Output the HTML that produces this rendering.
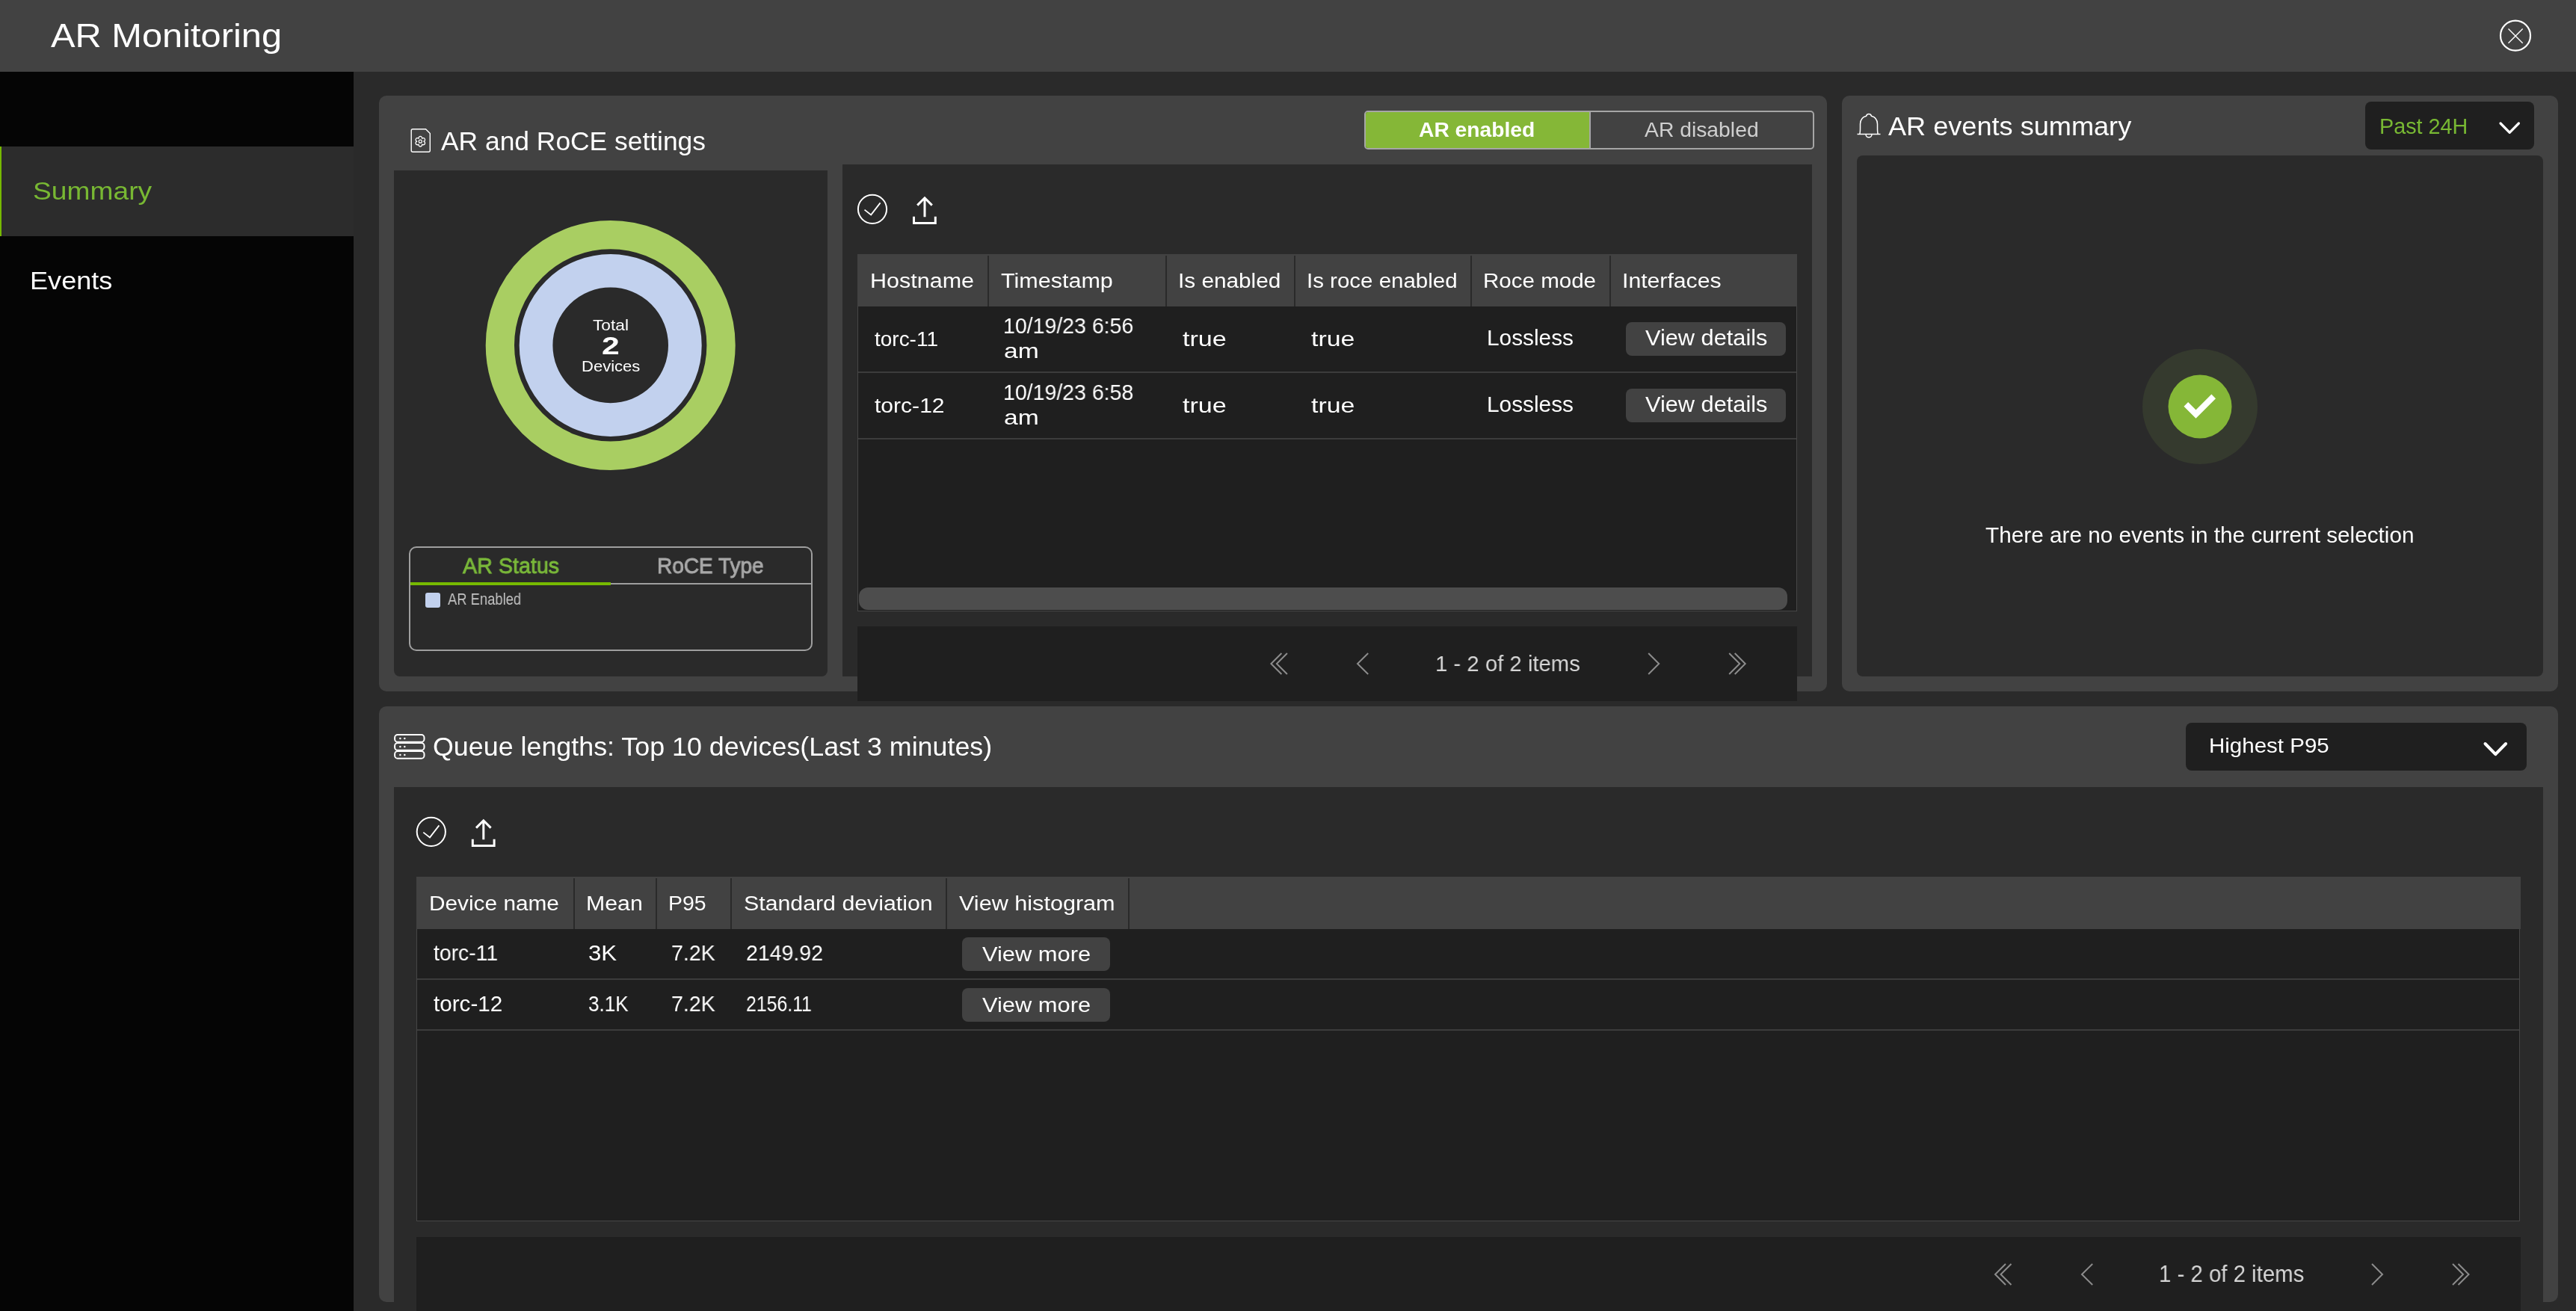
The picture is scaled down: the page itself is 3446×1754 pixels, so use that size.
<!DOCTYPE html>
<html><head><meta charset="utf-8"><style>
html,body{margin:0;padding:0;}
body{width:3446px;height:1754px;overflow:hidden;background:#2a2a2a;position:relative;font-family:"Liberation Sans",sans-serif;}
.a{position:absolute;box-sizing:border-box;}
.tx{position:absolute;white-space:pre;line-height:1;transform-origin:0 0;will-change:transform;}
svg{position:absolute;overflow:visible;}
</style></head><body>
<!-- header -->
<div class="a" style="left:0;top:0;width:3446px;height:96px;background:#424242"></div>
<svg style="left:0;top:0" width="1" height="1"><circle cx="3365" cy="47.7" r="20" fill="none" stroke="#fff" stroke-width="2.2"/><path d="M3355.5 38.5L3374.7 57.7M3374.7 38.5L3355.5 57.7" stroke="#fff" stroke-width="1.4"/></svg>
<!-- sidebar -->
<div class="a" style="left:0;top:96px;width:473px;height:1658px;background:#050505"></div>
<div class="a" style="left:0;top:196px;width:473px;height:120px;background:#2c2c2c"></div>
<div class="a" style="left:0;top:196px;width:2px;height:120px;background:#76b900"></div>

<!-- card1 -->
<div class="a" style="left:507px;top:128px;width:1937px;height:797px;background:#424242;border-radius:10px"></div>
<svg style="left:0;top:0" width="1" height="1"><path d="M552.2 172.7H569.5L575.3 178.5V201.2A2 2 0 0 1 573.3 203.2H552.2A2 2 0 0 1 550.2 201.2V174.7A2 2 0 0 1 552.2 172.7Z" fill="none" stroke="#fff" stroke-width="1.4"/>
<path d="M560.00 185.22C559.64 181.43 564.96 181.43 564.60 185.22C567.69 183.01 570.35 187.62 566.90 189.20C570.35 190.78 567.69 195.39 564.60 193.18C564.96 196.97 559.64 196.97 560.00 193.18C556.91 195.39 554.25 190.78 557.70 189.20C554.25 187.62 556.91 183.01 560.00 185.22Z" stroke-linejoin="round" fill="none" stroke="#fff" stroke-width="1.3"/><circle cx="562.3" cy="189.2" r="2" fill="none" stroke="#fff" stroke-width="1.2"/></svg>
<!-- toggle -->
<div class="a" style="left:1825px;top:148px;width:602px;height:52px;border:2px solid #a6a6a6;border-radius:5px;background:#424242;overflow:hidden"><div class="a" style="left:0;top:0;width:299px;height:48px;background:#85b737"></div><div class="a" style="left:299px;top:0;width:2px;height:48px;background:#a6a6a6"></div></div>
<!-- donut panel -->
<div class="a" style="left:527px;top:228px;width:580px;height:677px;background:#2a2a2a;border-radius:0 0 8px 8px"></div>
<svg style="left:0;top:0" width="1" height="1"><circle cx="816.7" cy="461.9" r="147.85" fill="none" stroke="#a9ce62" stroke-width="38.3"/><circle cx="816.7" cy="461.9" r="99.65" fill="none" stroke="#c2d1ee" stroke-width="44.7"/></svg>
<!-- legend -->
<div class="a" style="left:547px;top:731px;width:540px;height:140px;border:2px solid #9f9f9f;border-radius:10px"></div>
<div class="a" style="left:549px;top:780px;width:536px;height:2px;background:#9f9f9f"></div>
<div class="a" style="left:549px;top:779px;width:268px;height:4px;background:#76b900"></div>
<div class="a" style="left:569px;top:793px;width:20px;height:20px;background:#c2d1ee;border-radius:3px"></div>
<!-- table panel -->
<div class="a" style="left:1127px;top:220px;width:1297px;height:685px;background:#2a2a2a"></div>
<svg style="left:0;top:0" width="1" height="1" ><circle cx="1167" cy="279.85" r="19.1" fill="none" stroke="#fff" stroke-width="2"/><path d="M1156.5 280.6L1165.2 287.4L1177.6 271.4" fill="none" stroke="#fff" stroke-width="1.8"/><path d="M1237 265V290.3M1227.2 274.6L1237 264.8L1246.8 274.6M1222.5 289.8V298.5H1251.3V289.8" fill="none" stroke="#fff" stroke-width="3"/></svg>
<div class="a" style="left:1147px;top:340px;width:1257px;height:70px;background:#424242"></div>
<div class="a" style="left:1321px;top:342px;width:2px;height:68px;background:#2a2a2a"></div>
<div class="a" style="left:1559px;top:342px;width:2px;height:68px;background:#2a2a2a"></div>
<div class="a" style="left:1731px;top:342px;width:2px;height:68px;background:#2a2a2a"></div>
<div class="a" style="left:1967px;top:342px;width:2px;height:68px;background:#2a2a2a"></div>
<div class="a" style="left:2153px;top:342px;width:2px;height:68px;background:#2a2a2a"></div>
<div class="a" style="left:1147px;top:410px;width:1257px;height:408px;background:#1f1f1f;border:1.5px solid #464646;border-top:none"></div>
<div class="a" style="left:1148px;top:497px;width:1255px;height:2px;background:#3c3c3c"></div>
<div class="a" style="left:1148px;top:586px;width:1255px;height:2px;background:#3c3c3c"></div>
<div class="a" style="left:2175px;top:431px;width:214px;height:45px;background:#424242;border-radius:8px"></div>
<div class="a" style="left:2175px;top:520px;width:214px;height:45px;background:#424242;border-radius:8px"></div>
<div class="a" style="left:1149px;top:786px;width:1242px;height:30px;background:#4d4d4d;border-radius:12px"></div>
<div class="a" style="left:1147px;top:838px;width:1257px;height:100px;background:#1f1f1f"></div>
<svg style="left:0;top:0" width="1" height="1" ><path d="M1714.4 874L1700.4 888L1714.4 902M1721.9 874L1707.9 888L1721.9 902M1830.2 874L1816.0 888L1830.2 902M2205.2 874L2219.2 888L2205.2 902M2313.2 874L2327.2 888L2313.2 902M2320.7 874L2334.7 888L2320.7 902" fill="none" stroke="#8c8c8c" stroke-width="2"/></svg>

<!-- card2 -->
<div class="a" style="left:2464px;top:128px;width:958px;height:797px;background:#424242;border-radius:10px"></div>
<svg style="left:0;top:0" width="1" height="1" ><path d="M2484.5 179.4H2515.5M2487.8 179.2C2488.5 177 2488.5 174 2488.5 171V166C2488.5 160 2491.5 156.5 2496.6 155.2A3.5 3.5 0 0 1 2503.4 155.2C2508.5 156.5 2511.5 160 2511.5 166V171C2511.5 174 2511.5 177 2512.2 179.2M2496 179.8A4 4 0 0 0 2504 179.8" fill="none" stroke="#fff" stroke-width="1.5"/></svg>
<div class="a" style="left:3164px;top:136px;width:226px;height:64px;background:#1f1f1f;border-radius:8px"></div>
<svg style="left:0;top:0" width="1" height="1"><path d="M3345 165L3357.2 177.3L3369.4 165" fill="none" stroke="#fff" stroke-width="3.2" stroke-linecap="round" stroke-linejoin="round"/></svg>
<div class="a" style="left:2484px;top:208px;width:918px;height:697px;background:#2a2a2a;border-radius:8px"></div>
<svg style="left:0;top:0" width="1" height="1"><circle cx="2943" cy="544" r="77" fill="#353a2e"/><circle cx="2943" cy="544" r="42.5" fill="#85b737"/><path d="M2924.3 540.8L2937.5 554L2961.2 530.3" fill="none" stroke="#fff" stroke-width="8" stroke-linecap="butt" stroke-linejoin="miter"/></svg>

<!-- card3 -->
<div class="a" style="left:507px;top:945px;width:2915px;height:797px;background:#424242;border-radius:10px"></div>
<svg style="left:0;top:0" width="1" height="1" ><rect x="528.1" y="983.1" width="39.4" height="9.6" rx="3.8" fill="none" stroke="#fff" stroke-width="2"/><circle cx="535.4" cy="987.9" r="1.25" fill="#fff"/><circle cx="541.3" cy="987.9" r="1.25" fill="#fff"/><rect x="528.1" y="994.1" width="39.4" height="9.6" rx="3.8" fill="none" stroke="#fff" stroke-width="2"/><circle cx="535.4" cy="998.9" r="1.25" fill="#fff"/><circle cx="541.3" cy="998.9" r="1.25" fill="#fff"/><rect x="528.1" y="1005.1" width="39.4" height="9.6" rx="3.8" fill="none" stroke="#fff" stroke-width="2"/><circle cx="535.4" cy="1009.9" r="1.25" fill="#fff"/><circle cx="541.3" cy="1009.9" r="1.25" fill="#fff"/></svg>
<div class="a" style="left:2924px;top:967px;width:456px;height:64px;background:#1f1f1f;border-radius:8px"></div>
<svg style="left:0;top:0" width="1" height="1"><path d="M3324.5 995L3338.3 1009.2L3352.1 995" fill="none" stroke="#fff" stroke-width="4" stroke-linecap="round" stroke-linejoin="round"/></svg>
<div class="a" style="left:527px;top:1053px;width:2875px;height:701px;background:#2a2a2a"></div>
<svg style="left:0;top:0" width="1" height="1" ><circle cx="576.8" cy="1112.85" r="19.1" fill="none" stroke="#fff" stroke-width="2"/><path d="M566.3 1113.6L575.0 1120.4L587.3999999999999 1104.4" fill="none" stroke="#fff" stroke-width="1.8"/><path d="M646.8 1098V1123.3M637.0 1107.6L646.8 1097.8L656.5999999999999 1107.6M632.3 1122.8V1131.5H661.0999999999999V1122.8" fill="none" stroke="#fff" stroke-width="3"/></svg>
<div class="a" style="left:557px;top:1173px;width:2815px;height:70px;background:#424242"></div>
<div class="a" style="left:767px;top:1175px;width:2px;height:68px;background:#2a2a2a"></div>
<div class="a" style="left:877px;top:1175px;width:2px;height:68px;background:#2a2a2a"></div>
<div class="a" style="left:977px;top:1175px;width:2px;height:68px;background:#2a2a2a"></div>
<div class="a" style="left:1265px;top:1175px;width:2px;height:68px;background:#2a2a2a"></div>
<div class="a" style="left:1509px;top:1175px;width:2px;height:68px;background:#2a2a2a"></div>
<div class="a" style="left:557px;top:1243px;width:2814px;height:391px;background:#1f1f1f;border:1.5px solid #464646;border-top:none"></div>
<div class="a" style="left:558px;top:1309px;width:2812px;height:2px;background:#3c3c3c"></div>
<div class="a" style="left:558px;top:1377px;width:2812px;height:2px;background:#3c3c3c"></div>
<div class="a" style="left:1287px;top:1254px;width:198px;height:45px;background:#424242;border-radius:8px"></div>
<div class="a" style="left:1287px;top:1322px;width:198px;height:45px;background:#424242;border-radius:8px"></div>
<div class="a" style="left:557px;top:1655px;width:2815px;height:99px;background:#1f1f1f"></div>
<svg style="left:0;top:0" width="1" height="1" ><path d="M2683 1691L2669 1705L2683 1719M2690.5 1691L2676.5 1705L2690.5 1719M2799.2 1691L2785.0 1705L2799.2 1719M3173.0 1691L3187.0 1705L3173.0 1719M3281 1691L3295 1705L3281 1719M3288.5 1691L3302.5 1705L3288.5 1719" fill="none" stroke="#8c8c8c" stroke-width="2"/></svg>

<div class="tx" style="left:68.0px;top:25.49px;font-size:44.77px;transform:scaleX(1.0897);color:#fff;font-weight:400;">AR Monitoring</div>
<div class="tx" style="left:43.89px;top:238.69px;font-size:33.43px;transform:scaleX(1.1133);color:#78b833;font-weight:400;">Summary</div>
<div class="tx" style="left:39.57px;top:358.62px;font-size:33.87px;transform:scaleX(1.0668);color:#fff;font-weight:400;">Events</div>
<div class="tx" style="left:589.6px;top:171.22px;font-size:35.17px;transform:scaleX(1.0064);color:#fff;font-weight:400;">AR and RoCE settings</div>
<div class="tx" style="left:1898.0px;top:160.04px;font-size:27.47px;transform:scaleX(1.0273);color:#fff;font-weight:700;">AR enabled</div>
<div class="tx" style="left:2200.0px;top:160.04px;font-size:27.47px;transform:scaleX(1.0304);color:#cfcfcf;font-weight:400;">AR disabled</div>
<div class="tx" style="left:1163.79px;top:362.01px;font-size:27.62px;transform:scaleX(1.1047);color:#fff;font-weight:400;">Hostname</div>
<div class="tx" style="left:1339.2px;top:362.01px;font-size:27.62px;transform:scaleX(1.1054);color:#fff;font-weight:400;">Timestamp</div>
<div class="tx" style="left:1576.04px;top:362.01px;font-size:27.62px;transform:scaleX(1.0777);color:#fff;font-weight:400;">Is enabled</div>
<div class="tx" style="left:1747.86px;top:362.01px;font-size:27.62px;transform:scaleX(1.0678);color:#fff;font-weight:400;">Is roce enabled</div>
<div class="tx" style="left:1984.06px;top:362.01px;font-size:27.62px;transform:scaleX(1.0696);color:#fff;font-weight:400;">Roce mode</div>
<div class="tx" style="left:2169.51px;top:362.01px;font-size:27.62px;transform:scaleX(1.0935);color:#fff;font-weight:400;">Interfaces</div>
<div class="tx" style="left:1169.9px;top:439.8px;font-size:27.76px;transform:scaleX(1.0075);color:#fff;font-weight:400;">torc-11</div>
<div class="tx" style="left:1342.01px;top:421.96px;font-size:28.63px;transform:scaleX(0.9949);color:#fff;font-weight:400;">10/19/23 6:56</div>
<div class="tx" style="left:1342.8px;top:456.49px;font-size:28px;transform:scaleX(1.2004);color:#fff;font-weight:400;">am</div>
<div class="tx" style="left:1581.7px;top:439.59px;font-size:28px;transform:scaleX(1.2166);color:#fff;font-weight:400;">true</div>
<div class="tx" style="left:1753.9px;top:439.59px;font-size:28px;transform:scaleX(1.2082);color:#fff;font-weight:400;">true</div>
<div class="tx" style="left:1988.53px;top:438.43px;font-size:28.78px;transform:scaleX(1.0362);color:#fff;font-weight:400;">Lossless</div>
<div class="tx" style="left:2200.8px;top:438.43px;font-size:28.78px;transform:scaleX(1.0682);color:#fff;font-weight:400;">View details</div>
<div class="tx" style="left:1169.9px;top:528.8px;font-size:27.76px;transform:scaleX(1.0834);color:#fff;font-weight:400;">torc-12</div>
<div class="tx" style="left:1342.01px;top:510.96px;font-size:28.63px;transform:scaleX(0.9949);color:#fff;font-weight:400;">10/19/23 6:58</div>
<div class="tx" style="left:1342.8px;top:545.49px;font-size:28px;transform:scaleX(1.2004);color:#fff;font-weight:400;">am</div>
<div class="tx" style="left:1581.7px;top:528.59px;font-size:28px;transform:scaleX(1.2166);color:#fff;font-weight:400;">true</div>
<div class="tx" style="left:1753.9px;top:528.59px;font-size:28px;transform:scaleX(1.2082);color:#fff;font-weight:400;">true</div>
<div class="tx" style="left:1988.53px;top:527.43px;font-size:28.78px;transform:scaleX(1.0362);color:#fff;font-weight:400;">Lossless</div>
<div class="tx" style="left:2200.8px;top:527.43px;font-size:28.78px;transform:scaleX(1.0682);color:#fff;font-weight:400;">View details</div>
<div class="tx" style="left:1919.53px;top:872.77px;font-size:29.8px;transform:scaleX(0.9837);color:#d6d6d6;font-weight:400;">1 - 2 of 2 items</div>
<div class="tx" style="left:793.0px;top:425.02px;font-size:20.06px;transform:scaleX(1.1339);color:#fff;font-weight:400;">Total</div>
<div class="tx" style="left:804.71px;top:445.57px;font-size:32.99px;transform:scaleX(1.2941);color:#fff;font-weight:700;">2</div>
<div class="tx" style="left:777.92px;top:479.77px;font-size:20.35px;transform:scaleX(1.0817);color:#fff;font-weight:400;">Devices</div>
<div class="tx" style="left:618.7px;top:742.3px;font-size:29.65px;transform:scaleX(0.9674);color:#7ab83a;font-weight:400;-webkit-text-stroke:0.9px #7ab83a;">AR Status</div>
<div class="tx" style="left:879.11px;top:742.3px;font-size:29.65px;transform:scaleX(0.9445);color:#a8a8a8;font-weight:400;-webkit-text-stroke:0.9px #a8a8a8;">RoCE Type</div>
<div class="tx" style="left:599.0px;top:792.11px;font-size:21.37px;transform:scaleX(0.8611);color:#c4c4c4;font-weight:400;">AR Enabled</div>
<div class="tx" style="left:2526.2px;top:151.96px;font-size:34.3px;transform:scaleX(1.0533);color:#fff;font-weight:400;">AR events summary</div>
<div class="tx" style="left:3183.3px;top:154.73px;font-size:28.78px;transform:scaleX(1.0005);color:#78b833;font-weight:400;">Past 24H</div>
<div class="tx" style="left:2656.2px;top:702.43px;font-size:28.78px;transform:scaleX(1.0337);color:#fff;font-weight:400;">There are no events in the current selection</div>
<div class="tx" style="left:578.89px;top:982.35px;font-size:35.61px;transform:scaleX(1.0061);color:#fff;font-weight:400;">Queue lengths: Top 10 devices(Last 3 minutes)</div>
<div class="tx" style="left:2955.4px;top:984.45px;font-size:28.05px;transform:scaleX(1.052);color:#fff;font-weight:400;">Highest P95</div>
<div class="tx" style="left:574.49px;top:1194.32px;font-size:28.2px;transform:scaleX(1.0573);color:#fff;font-weight:400;">Device name</div>
<div class="tx" style="left:783.55px;top:1194.32px;font-size:28.2px;transform:scaleX(1.0743);color:#fff;font-weight:400;">Mean</div>
<div class="tx" style="left:893.78px;top:1194.32px;font-size:28.2px;transform:scaleX(1.0089);color:#fff;font-weight:400;">P95</div>
<div class="tx" style="left:994.53px;top:1194.32px;font-size:28.2px;transform:scaleX(1.0749);color:#fff;font-weight:400;">Standard deviation</div>
<div class="tx" style="left:1283.0px;top:1194.32px;font-size:28.2px;transform:scaleX(1.0855);color:#fff;font-weight:400;">View histogram</div>
<div class="tx" style="left:580.0px;top:1261.03px;font-size:28.78px;transform:scaleX(0.9839);color:#fff;font-weight:400;">torc-11</div>
<div class="tx" style="left:787.31px;top:1261.03px;font-size:28.78px;transform:scaleX(1.0854);color:#fff;font-weight:400;">3K</div>
<div class="tx" style="left:898.01px;top:1261.03px;font-size:28.78px;transform:scaleX(0.9916);color:#fff;font-weight:400;">7.2K</div>
<div class="tx" style="left:998.21px;top:1261.03px;font-size:28.78px;transform:scaleX(0.9904);color:#fff;font-weight:400;">2149.92</div>
<div class="tx" style="left:1313.7px;top:1262.32px;font-size:28.2px;transform:scaleX(1.0935);color:#fff;font-weight:400;">View more</div>
<div class="tx" style="left:580.0px;top:1328.93px;font-size:28.78px;transform:scaleX(1.0302);color:#fff;font-weight:400;">torc-12</div>
<div class="tx" style="left:787.49px;top:1328.93px;font-size:28.78px;transform:scaleX(0.9054);color:#fff;font-weight:400;">3.1K</div>
<div class="tx" style="left:898.01px;top:1328.93px;font-size:28.78px;transform:scaleX(0.9916);color:#fff;font-weight:400;">7.2K</div>
<div class="tx" style="left:998.34px;top:1328.93px;font-size:28.78px;transform:scaleX(0.8633);color:#fff;font-weight:400;">2156.11</div>
<div class="tx" style="left:1313.7px;top:1330.22px;font-size:28.2px;transform:scaleX(1.0935);color:#fff;font-weight:400;">View more</div>
<div class="tx" style="left:2887.55px;top:1689.47px;font-size:31.69px;transform:scaleX(0.9273);color:#d6d6d6;font-weight:400;">1 - 2 of 2 items</div>
</body></html>
